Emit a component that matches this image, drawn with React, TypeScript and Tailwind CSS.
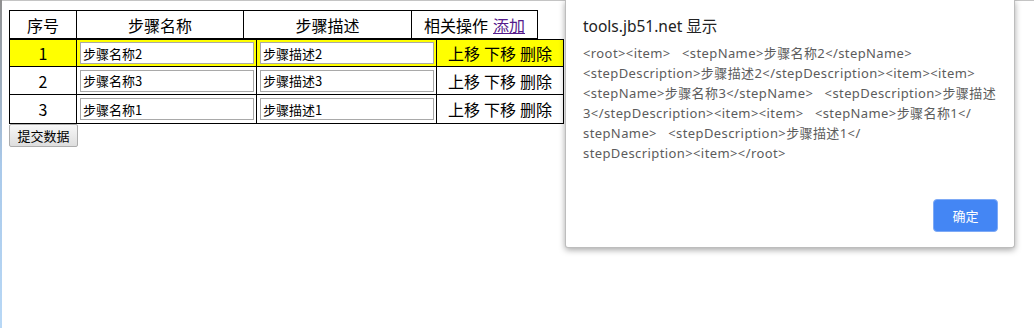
import React from 'react';

const rows = [
  { n: '1', name: '步骤名称2', desc: '步骤描述2', hl: true },
  { n: '2', name: '步骤名称3', desc: '步骤描述3', hl: false },
  { n: '3', name: '步骤名称1', desc: '步骤描述1', hl: false },
];

const lines = [
  '<root><item>   <stepName>步骤名称2</stepName>',
  '<stepDescription>步骤描述2</stepDescription><item><item>',
  '<stepName>步骤名称3</stepName>   <stepDescription>步骤描述',
  '3</stepDescription><item><item>   <stepName>步骤名称1</',
  'stepName>   <stepDescription>步骤描述1</',
  'stepDescription><item></root>',
];

export default function App() {
  return (
    <div className="relative flex h-[328px] w-[1034px] overflow-hidden bg-white font-['Noto_Sans_CJK_SC',sans-serif] text-black">
      <div className="w-[2px] shrink-0 bg-gradient-to-b from-[#8f8f8f] via-[#a9c9ea] to-[#b8d8f6]" />
      <div className="flex-1 border-t border-[#c4c4c4] pl-[7px] pt-[9px]">
        {/* header table */}
        <div className="flex h-[29px] w-[529px] border border-black text-[16px] leading-none">
          <div className="flex w-[67px] items-center justify-center border-r border-black">序号</div>
          <div className="flex w-[167px] items-center justify-center border-r border-black">步骤名称</div>
          <div className="flex w-[168px] items-center justify-center border-r border-black">步骤描述</div>
          <div className="flex w-[125px] items-center justify-center gap-[5px]">
            <span>相关操作</span>
            <span className="text-[#551a8b] underline">添加</span>
          </div>
        </div>
        {/* body table */}
        <div className="w-[555px] divide-y divide-black border border-black">
          {rows.map((r, i) => (
            <div
              key={r.n}
              className={`flex ${i === 0 ? 'h-[27px]' : 'h-[28px]'} ${r.hl ? 'bg-[#ffff00]' : 'bg-white'}`}
            >
              <div className="flex w-[67px] items-center justify-center border-r border-black text-[16px]">{r.n}</div>
              <div className="flex w-[180px] items-center border-r border-black pl-[3px]">
                <input
                  readOnly
                  value={r.name}
                  className="h-[22px] w-[174px] border border-[#a9a9a9] bg-white px-[2px] text-[13px] text-black outline-none"
                />
              </div>
              <div className="flex w-[180px] items-center border-r border-black pl-[3px]">
                <input
                  readOnly
                  value={r.desc}
                  className="h-[22px] w-[174px] border border-[#a9a9a9] bg-white px-[2px] text-[13px] text-black outline-none"
                />
              </div>
              <div className="flex w-[126px] items-center justify-center gap-[4px] text-[16px]">
                <span>上移</span>
                <span>下移</span>
                <span>删除</span>
              </div>
            </div>
          ))}
        </div>
        <button className="flex h-[23px] w-[69px] items-center justify-center rounded-[2px] border border-[#adadad] bg-gradient-to-b from-[#f7f7f7] to-[#dedede] text-[13px] text-black">
          提交数据
        </button>
      </div>

      {/* alert dialog overlay */}
      <div className="absolute left-[565px] top-0 flex h-[248px] w-[450px] flex-col rounded-b-[3px] border-x border-b border-[#bdbdbd] bg-white shadow-[0_2px_6px_rgba(0,0,0,0.35)]">
        <div className="pl-[17px] pt-[15px] text-[15.5px] leading-[22px] text-[#222] font-['Noto_Sans','Noto_Sans_CJK_SC',sans-serif]">
          tools.jb51.net 显示
        </div>
        <div className="mt-[6px] pl-[17px] text-[13px] leading-[20px] tracking-[0.4px] text-[#5c5c5c] font-['Noto_Sans','Noto_Sans_CJK_SC',sans-serif]">
          {lines.map((l, i) => (
            <div key={i} className="whitespace-pre">{l}</div>
          ))}
        </div>
        <div className="flex flex-1 items-end justify-end pb-[15px] pr-[16px]">
          <button className="flex h-[33px] w-[65px] items-center justify-center rounded-[4px] border border-[#7eaaf6] bg-[#4486f4] text-[13px] text-white">
            确定
          </button>
        </div>
      </div>
    </div>
  );
}
